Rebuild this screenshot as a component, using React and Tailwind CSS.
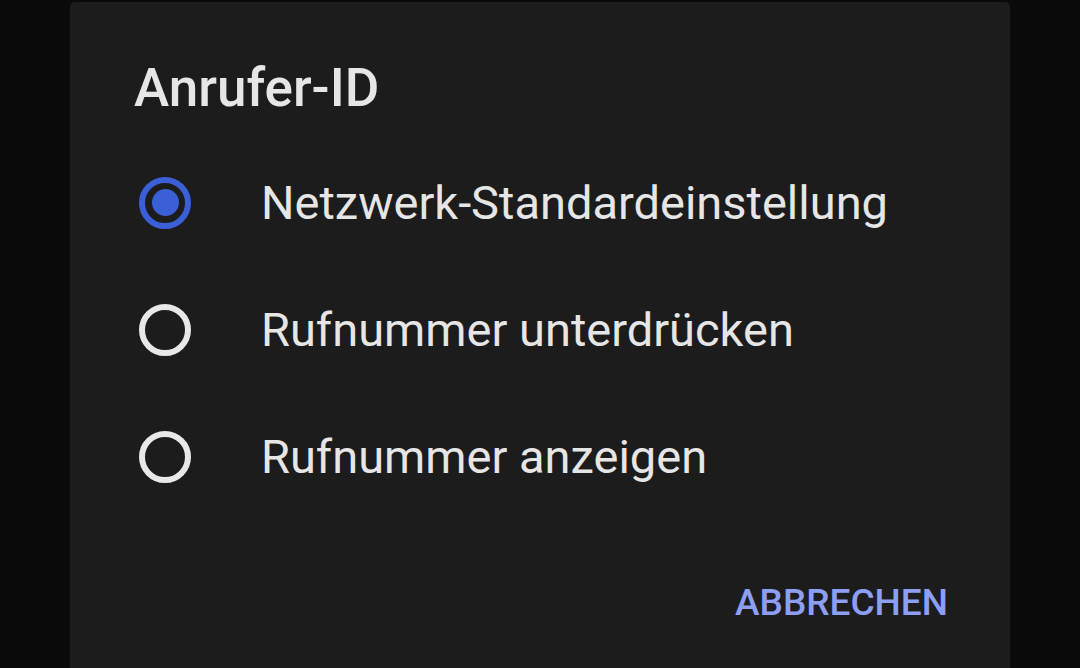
import React, { useState } from 'react';

const options = [
  'Netzwerk-Standardeinstellung',
  'Rufnummer unterdrücken',
  'Rufnummer anzeigen',
];

const Radio = ({ checked }) => (
  <div
    className={`w-[52px] h-[52px] rounded-full border-[6px] flex items-center justify-center ${
      checked ? 'border-[#3b5fd6]' : 'border-[#e8e8e8]'
    }`}
  >
    {checked && <div className="w-[27px] h-[27px] rounded-full bg-[#3b5fd6]" />}
  </div>
);

const App = () => {
  const [selected, setSelected] = useState(0);

  return (
    <div className="w-[1080px] h-[668px] bg-[#0a0a0a] overflow-hidden font-['Roboto',sans-serif]">
      <div className="ml-[70px] mt-[2px] w-[940px] h-[700px] bg-[#1c1c1c] rounded-[5px] pt-[56px]">
        <h1 className="pl-[64px] text-[53px] leading-[60px] font-medium text-[#e6e6e6]">
          Anrufer-ID
        </h1>

        <div className="mt-[21px] flex flex-col">
          {options.map((label, i) => (
            <button
              key={label}
              onClick={() => setSelected(i)}
              className="h-[127px] flex items-center pl-[69px] text-left"
            >
              <Radio checked={selected === i} />
              <span className="ml-[70px] text-[47px] leading-[56px] text-[#e6e6e6]">{label}</span>
            </button>
          ))}
        </div>

        <div className="flex justify-end pr-[62px] mt-[61px]">
          <button className="text-[37px] leading-[44px] font-medium text-[#8c9ff5]">
            ABBRECHEN
          </button>
        </div>
      </div>
    </div>
  );
};

export default App;
